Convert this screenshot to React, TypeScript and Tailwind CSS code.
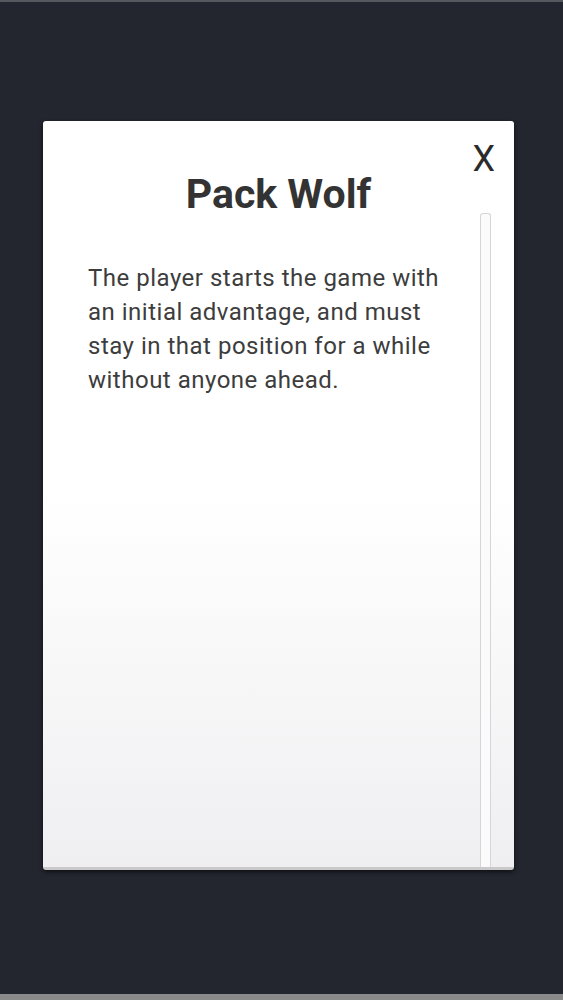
export default function App() {
    return (
        <div className="w-[563px] h-[1000px] bg-[#23262f] flex flex-col overflow-hidden" style={{ fontFamily: "Roboto, 'Noto Sans', sans-serif" }}>
            <div className="h-[2px] bg-[#55585f]" />
            <div className="flex-1 pl-[43px] pr-[49px] pt-[119px]">
                {/* Dialog card */}
                <div className="relative h-[749px] rounded-[3px] bg-gradient-to-b from-white via-white to-[#efeff1] border-b-[3px] border-[#c9c9cc] shadow-[0_2px_4px_rgba(0,0,0,0.6)] flex flex-col">
                    <h1 className="mt-[49px] text-center text-[41px] leading-[48px] font-bold text-[#333333]">Pack Wolf</h1>
                    <p className="mt-[43px] pl-[45px] pr-[60px] text-[24px] leading-[34px] tracking-[0.5px] text-[#3d3d3d]">
                        The player starts the game with an initial advantage, and must stay in that position for a while without anyone ahead.
                    </p>
                    {/* Scroll track */}
                    <div className="absolute top-[92px] bottom-0 right-[23px] w-[11px] rounded-t-[3px] border border-b-0 border-[#d6d6da] bg-[#fbfbfc]" />
                    <button className="absolute top-[20px] right-[19px] text-[36px] leading-none text-[#2b2b2b]">X</button>
                </div>
            </div>
            <div className="h-[6px] bg-[#8a8a8a]" />
        </div>
    );
}
